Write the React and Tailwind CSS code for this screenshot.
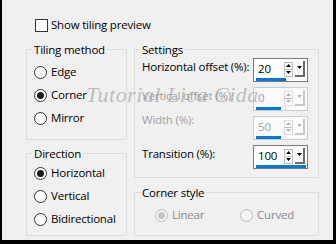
import React from 'react';

// small triangle glyph for the spin buttons
const Tri = ({ up, color }) => (
  <svg width="5" height="3" viewBox="0 0 5 3" className="block">
    {up ? <path d="M0 3 L2.5 0 L5 3 Z" fill={color} /> : <path d="M0 0 L5 0 L2.5 3 Z" fill={color} />}
  </svg>
);

const Radio = ({ label, checked, disabled, className = '' }) => (
  <label className={'flex items-center gap-[4px] h-[22px] ' + className}>
    <span
      className={
        'flex items-center justify-center w-[13px] h-[13px] rounded-full border ' +
        (disabled ? 'border-[#bcbcbc] bg-[#f4f4f4]' : 'border-[#333333] bg-white')
      }
    >
      {checked && (
        <span className={'w-[7px] h-[7px] rounded-full ' + (disabled ? 'bg-[#c4c4c4]' : 'bg-[#1a1a1a]')} />
      )}
    </span>
    <span className={disabled ? 'text-[#8a8a8a]' : 'text-black'}>{label}</span>
  </label>
);

// group box: legend sits at the fieldset's edge, padding goes on the inner div
const Group = ({ title, className, inner, children }) => (
  <fieldset className={'border border-[#dcdcdc] ' + className}>
    <legend className="ml-[5px] px-[2px] leading-[15px] text-black">{title}</legend>
    <div className={inner}>{children}</div>
  </fieldset>
);

const Spin = ({ value, pct, disabled }) => {
  const tri = disabled ? '#b4b4b4' : '#000';
  return (
    <div
      className={
        'w-[55px] h-[24px] shrink-0 border flex flex-col pt-[2px] px-[2px] ' +
        (disabled ? 'border-[#cccccc] bg-[#fbfbfb]' : 'border-[#7a7a7a] bg-white')
      }
    >
      <div className="flex items-center h-[16px]">
        <span className={'flex-1 pl-[2px] leading-[16px] ' + (disabled ? 'text-[#a0a0a0]' : 'text-black')}>
          {value}
        </span>
        <div className={'flex flex-col w-[9px] h-[15px] border ' + (disabled ? 'border-[#dcdcdc]' : 'border-[#bdbdbd]')}>
          <div className="flex-1 flex items-center justify-center border-b border-[#bdbdbd]">
            <Tri up color={tri} />
          </div>
          <div className="flex-1 flex items-center justify-center">
            <Tri color={tri} />
          </div>
        </div>
        <div
          className={
            'ml-[2px] w-[10px] h-[16px] flex justify-center pt-[5px] bg-[#fdfdfd] border-r-2 border-b-2 ' +
            (disabled ? 'border-[#c8c8c8]' : 'border-[#6b6b6b]')
          }
        >
          <Tri color={tri} />
        </div>
      </div>
      <div className="mt-[1px] h-[3px] bg-[#0078d7]" style={{ width: pct * 50 + 'px' }} />
    </div>
  );
};

const rows = [
  { label: 'Horizontal offset (%):', value: '20', pct: 0.6, mt: 'mt-[1px]' },
  { label: 'Vertical offset (%):', value: '0', pct: 0.5, disabled: true, mt: 'mt-[1px]' },
  { label: 'Width (%):', value: '50', pct: 0.5, disabled: true, mt: 'mt-[-4px]' },
  { label: 'Transition (%):', value: '100', pct: 1, mt: 'mt-[1px]' },
];

export default function App() {
  return (
    <div className="relative w-[336px] h-[244px] overflow-hidden bg-[#f0f0f0] border-l-2 border-r-[3px] border-b-4 border-black pt-[17px] pl-[24px] text-[11.5px] tracking-[-0.2px] leading-[16px] whitespace-nowrap font-['Open_Sans','Noto_Sans',sans-serif]">
      <label className="flex items-center gap-[3px] ml-[9px] h-[16px]">
        <span className="w-[13px] h-[13px] border border-[#333333] bg-white" />
        <span className="text-black">Show tiling preview</span>
      </label>

      <div className="flex gap-[7px] mt-[9px]">
        <div className="flex flex-col gap-[6px] w-[101px]">
          <Group title="Tiling method" className="h-[98px]" inner="flex flex-col gap-[1px] pl-[7px] pt-[4px]">
            <Radio label="Edge" />
            <Radio label="Corner" checked />
            <Radio label="Mirror" />
          </Group>
          <Group title="Direction" className="h-[90px]" inner="flex flex-col gap-[1px] pl-[7px] pt-[1px]">
            <Radio label="Horizontal" checked />
            <Radio label="Vertical" />
            <Radio label="Bidirectional" />
          </Group>
        </div>

        <div className="flex flex-col gap-[7px] w-[185px]">
          <Group title="Settings" className="h-[136px]" inner="flex flex-col gap-[5px] pl-[7px] pr-[10px] pt-[1px]">
            {rows.map((r) => (
              <div key={r.label} className="flex items-start">
                <span className={'flex-1 ' + r.mt + ' ' + (r.disabled ? 'text-[#a0a0a0]' : 'text-black')}>
                  {r.label}
                </span>
                <Spin value={r.value} pct={r.pct} disabled={r.disabled} />
              </div>
            ))}
          </Group>
          <Group title="Corner style" className="h-[51px]" inner="flex pl-[20px] pt-[4px]">
            <Radio label="Linear" checked disabled className="w-[85px]" />
            <Radio label="Curved" disabled />
          </Group>
        </div>
      </div>

      <span className="absolute left-[84px] top-[81px] text-[22px] leading-[28px] italic text-[#9a9a9a]/60 font-['Liberation_Serif',serif] tracking-[0.5px] pointer-events-none">
        Tutorial Lica Cida
      </span>
    </div>
  );
}
